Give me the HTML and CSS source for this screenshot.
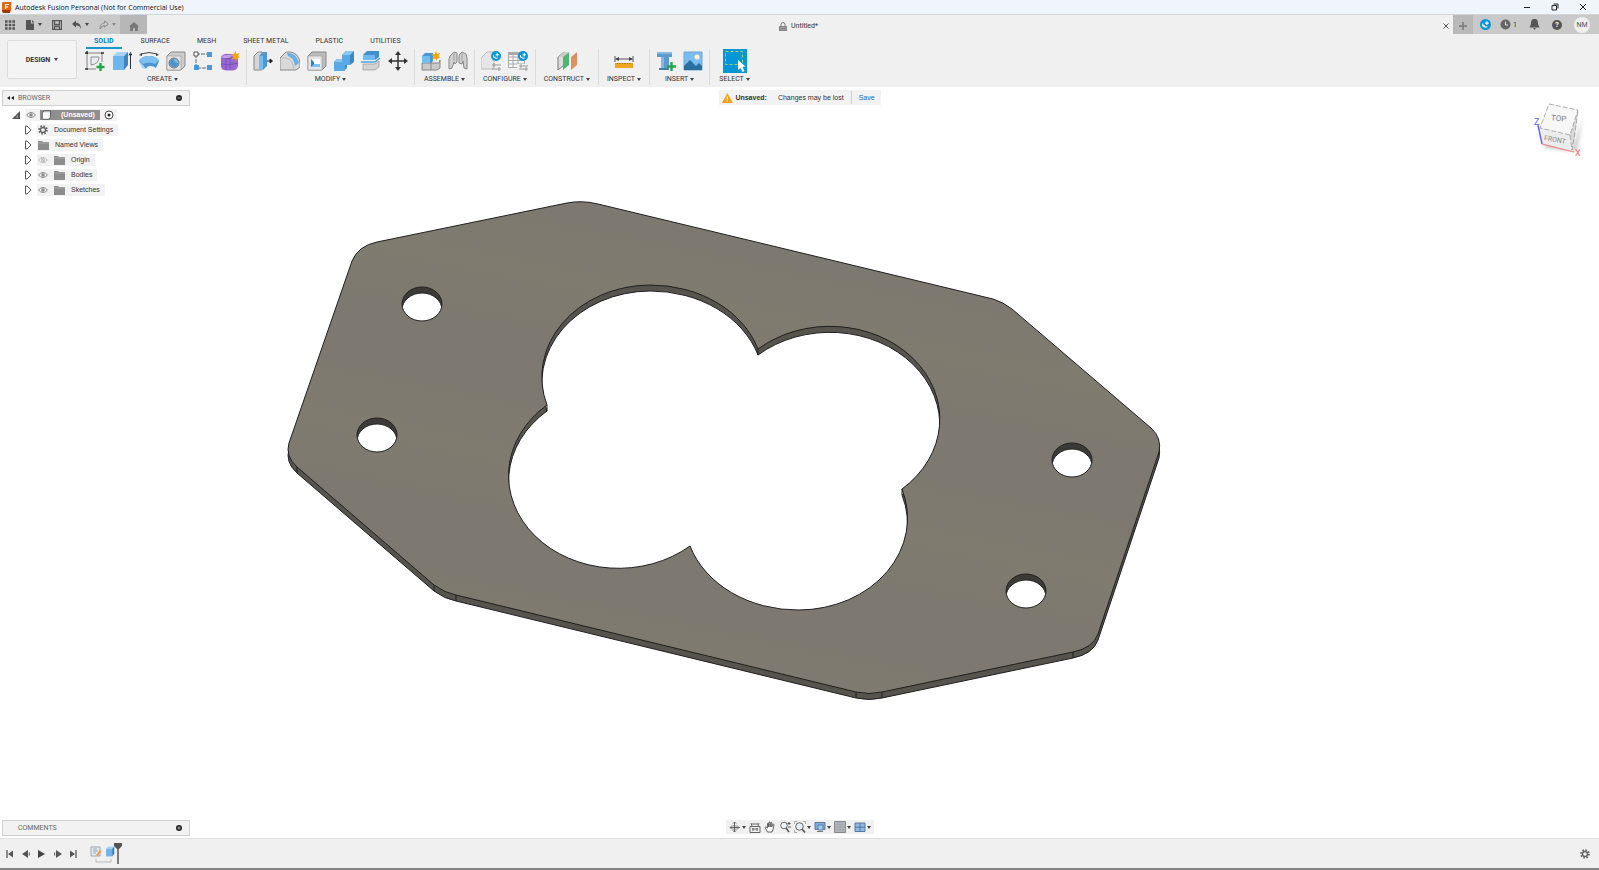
FILE: index.html
```html
<!DOCTYPE html>
<html lang="en">
<head>
  <meta charset="UTF-8">
  <title>Autodesk Fusion Personal (Not for Commercial Use)</title>
  <link rel="stylesheet" href="styles.css">
</head>
<body>
  <!-- shared icon shapes -->
  <svg class="defs" aria-hidden="true">
    <symbol id="folder" viewBox="0 0 11 10"><path d="M0 1h4l1 1h6v8H0z" fill="#8c8c8c"/><path d="M0 3h11" stroke="#b5b5b5" stroke-width=".7"/></symbol>
    <symbol id="eye" viewBox="0 0 10 8"><path d="M.5 4Q5-1 9.500 4 5 9 .5 4z" fill="none" stroke="#888"/><circle cx="5" cy="4" r="1.700" fill="#888"/></symbol>
    <symbol id="eye-off" viewBox="0 0 10 8"><path d="M.5 4Q5-1 9.500 4 5 9 .5 4zM3 1l4 6" fill="none" stroke="#bbb"/><circle cx="5" cy="4" r="1.500" fill="none" stroke="#bbb"/></symbol>
    <symbol id="open" viewBox="0 0 8 10"><path d="M1.500 1h1.500l4 4-4 4H1.500z" fill="#fff" stroke="#555"/></symbol>
    <symbol id="gear" viewBox="0 0 10 10"><circle cx="5" cy="5" r="3.800" fill="none" stroke="#666" stroke-width="2" stroke-dasharray="1.500 1.480"/><circle cx="5" cy="5" r="2.500" fill="none" stroke="#666" stroke-width="1.400"/></symbol>
    <symbol id="badge" viewBox="0 0 12 12"><circle cx="6" cy="6" r="6" fill="#0696d7"/><path d="M7.500 2.500v4M5.500 4.500h4M3 5v2.500h2.500M3.500 7.500q2 2 4.500 1" fill="none" stroke="#fff" stroke-width="1.200"/></symbol>
    <symbol id="extrude" viewBox="0 0 20 20"><path d="M1 5l4-4h11l-4 4z" fill="#a5d4f6"/><path d="M1 5h11v14H1z" fill="#6db5ec"/><path d="M12 5l4-4v13l-4 5z" fill="#3d83bd"/></symbol>
  </svg>

  <header class="titlebar">
    <svg class="logo" viewBox="0 0 10 11"><path d="M1 0h8v9l-2 2H1L0 9V1z" fill="#e8640c"/><path d="M0 8h8v3H1z" fill="#933b09"/><path d="M3.500 7V2.500h3.500M3.500 4.800h2.500" fill="none" stroke="#fff" stroke-width="1.200"/></svg>
    <span class="app-title">Autodesk Fusion Personal (Not for Commercial Use)</span>
    <div class="window-buttons">
      <button aria-label="Minimize"><svg viewBox="0 0 8 8"><path d="M1 4.500h6" stroke="#222"/></svg></button>
      <button aria-label="Restore"><svg viewBox="0 0 8 8"><path d="M1 2.500h4.500V7H1zM2.500 1H7v4.500" fill="none" stroke="#222"/></svg></button>
      <button aria-label="Close"><svg viewBox="0 0 8 8"><path d="M1 1l6 6M7 1L1 7" stroke="#222"/></svg></button>
    </div>
  </header>

  <div class="tabstrip">
    <div class="quick">
      <button aria-label="Data panel"><svg viewBox="0 0 10 10"><path d="M0 1.500h10M0 5h10M0 8.500h10" stroke="#555" stroke-width="2.600" stroke-dasharray="2.600 1.100"/></svg></button>
      <button class="with-caret" aria-label="File"><svg viewBox="0 0 10 10"><path d="M1 0h5v3.500h3V10H1z" fill="#555"/><path d="M7 0l2.500 2.500H7z" fill="#555"/></svg><i class="caret"></i></button>
      <button aria-label="Save"><svg viewBox="0 0 10 10"><path d="M.5.5h9v9h-9zM2.500 1v3.500h5V1M2.500 9V6.500h5V9" fill="none" stroke="#555" stroke-width="1.300"/></svg></button>
      <button class="with-caret undo" aria-label="Undo"><svg viewBox="0 0 10 10"><path d="M0 4l4-3.500v2.200c3 0 5 2 5 6.300C8 6.500 7 5.500 4 5.500v2z" fill="#555"/></svg><i class="caret"></i></button>
      <button class="with-caret redo" aria-label="Redo"><svg viewBox="0 0 10 10"><path d="M9.500 4l-4-3v2C3 3 1 5 1 9q1-3 4.500-3.500V7z" fill="none" stroke="#888"/></svg><i class="caret"></i></button>
    </div>
    <button class="home" aria-label="Home"><svg viewBox="0 0 10 10"><path d="M0 5.500L5 1l5 4.500H8.800V10H6V7H4v3H1.200V5.500z" fill="#777"/></svg></button>
    <div class="doc-tab">
      <span class="doc-name"><svg viewBox="0 0 8 9"><path d="M0 4h8v5H0z" fill="#888"/><path d="M2 4V2.500a2 2 0 0 1 4 0V4" fill="none" stroke="#777"/><path d="M1 5.500h6M1 7.300h6" stroke="#aaa" stroke-width=".6"/></svg>Untitled*</span>
      <button aria-label="Close tab"><svg viewBox="0 0 8 8"><path d="M1.500 1.500l5 5M6.500 1.500l-5 5" stroke="#555"/></svg></button>
    </div>
    <button class="new-tab" aria-label="New design"><svg viewBox="0 0 10 10"><path d="M5 1v8M1 5h8" stroke="#777" stroke-width="1.500"/></svg></button>
    <div class="account">
      <button aria-label="Extensions"><svg><use href="#badge"/></svg></button>
      <button class="jobs" aria-label="Job status"><svg viewBox="0 0 11 11"><circle cx="5.500" cy="5.500" r="5" fill="#666"/><path d="M5.500 2.500v3.500H8" fill="none" stroke="#ddd"/></svg>1</button>
      <button aria-label="Notifications"><svg viewBox="0 0 10 11"><path d="M5 0c3 0 3.500 2 3.500 5L10 8.500H0L1.500 5C1.500 2 2 0 5 0z" fill="#555"/><path d="M3.500 9h3L5 11z" fill="#555"/></svg></button>
      <button class="help" aria-label="Help">?</button>
      <button class="avatar" aria-label="Profile">NM</button>
    </div>
  </div>

  <div class="ribbon">
    <button class="workspace">DESIGN <i class="caret"></i></button>
    <div class="ribbon-main">
      <nav class="ribbon-tabs">
        <button class="active">SOLID</button>
        <button>SURFACE</button>
        <button>MESH</button>
        <button>SHEET METAL</button>
        <button>PLASTIC</button>
        <button>UTILITIES</button>
      </nav>
      <div class="groups">
        <section class="group">
          <div class="tools">
            <button aria-label="Create sketch"><svg viewBox="0 0 20 20"><path d="M2 2h15v9M2 2v16h9" fill="none" stroke="#666" stroke-width=".8"/><path d="M6 14V6h8q0 7-8 8z" fill="#e9edf1" stroke="#777" stroke-width=".8"/><path d="M0 2h3M2 0v3M16 2h3M0 18h3" stroke="#333" stroke-width="1.500"/><path d="M15.500 12v8M11.500 16h8" stroke="#23a545" stroke-width="2.400"/></svg></button>
            <button aria-label="Extrude"><svg viewBox="0 0 20 20"><use href="#extrude"/><path d="M18.500 18V3M17 4.500l1.500-3 1.500 3" fill="none" stroke="#333"/></svg></button>
            <button aria-label="Revolve"><svg viewBox="0 0 20 20"><path d="M0 10q3-5 10-5t10 5l-3 7q-2-2-6-2-3 0-4 3z" fill="#4b94cf"/><path d="M0 9q4-4 10-4t10 4l-4 4q-6-3-12 0z" fill="#7dbff1"/><path d="M0 11l4 3 3 4-4-1z" fill="#a4d3f5"/><path d="M2 3q8-3 16 0" fill="none" stroke="#444"/><path d="M0 4l3-2v3zM20 4l-3-2v3z" fill="#444"/></svg></button>
            <button aria-label="Hole"><svg viewBox="0 0 20 20"><path d="M1 5l4-4h14v14l-4 4H1z" fill="#ccc" stroke="#888"/><path d="M1 5h14v14H1z" fill="#e3e3e3" stroke="#999" stroke-width=".6"/><circle cx="8" cy="12" r="5" fill="#89b9dc" stroke="#777"/><path d="M8 8a4 4 0 1 0 4 4q-4 0-4-4" fill="#4d94cd"/></svg></button>
            <button aria-label="Pattern"><svg viewBox="0 0 20 20"><path d="M3 3h14M3 3v14h14" fill="none" stroke="#666" stroke-dasharray="4 1"/><path d="M1 1h4v4H1z" fill="#fff" stroke="#555"/><path d="M14 1h5v5h-5zM1 14h5v5H1zM14 14h5v5h-5z" fill="#4b98d4"/></svg></button>
            <button aria-label="Create form"><svg viewBox="0 0 20 20"><path d="M1 7q0-3 4-4h7q5 1 6 5v7q-1 4-5 4.500H6Q1 19 1 15z" fill="#9669d3"/><path d="M2 7q5 2 9 0l6-2M10 8v11M1 13q8 2 17-1M6 3v16" fill="none" stroke="#7549ae" stroke-width=".8"/><path d="M2 7q0-3 4-3h6q-1 4-10 3" fill="#bf9aed"/><path d="M15.500 0l1 3 3-1-1.500 3 2 1.500-3 .5-.5 3-2-2.500-3 1 1.500-3-2-2 3-.3z" fill="#f5a20b"/></svg></button>
          </div>
          <button class="group-label">CREATE <i class="caret"></i></button>
        </section>
        <section class="group">
          <div class="tools">
            <button aria-label="Press pull"><svg viewBox="0 0 20 20"><path d="M1 5l4-4h4v18H1z" fill="#d5d5d5" stroke="#888"/><path d="M6 5l4-4h4v14l-4 4H6z" fill="#4a98d4"/><path d="M6 5h4v14H6z" fill="#75bdf0"/><path d="M14 10h4M17 8l2.500 2-2.500 2z" stroke="#222" fill="#222"/></svg></button>
            <button aria-label="Fillet"><svg viewBox="0 0 20 20"><path d="M0 19V7l6-6h4q9 1 10 11v4l-4 3z" fill="#d9d9d9" stroke="#888"/><path d="M7 2q9-1 12 10l-4 3Q14 7 8 5z" fill="#66b0e9"/><path d="M1 7h5q7 1 8 12" fill="none" stroke="#bbb"/></svg></button>
            <button aria-label="Shell"><svg viewBox="0 0 20 20"><path d="M1 5l4-4h14v14l-4 4H1z" fill="#bcbcbc" stroke="#888"/><path d="M1 5h14v14H1z" fill="#e6e6e6" stroke="#999" stroke-width=".6"/><path d="M4 8h9v8H4z" fill="#fff"/><path d="M4 8l3 3v3l6 2H4z" fill="#357fb9"/><path d="M7 13h6v3H4z" fill="#7bc0f2"/></svg></button>
            <button aria-label="Combine"><svg viewBox="0 0 20 20"><path d="M0 11l3-3h5V4l4-4h8v11l-4 3h-3v3l-3 3H0z" fill="#3e88c4"/><path d="M0 11h8V4h8v10h-5v6H0z" fill="#5ba9e4"/><path d="M8 4l4-4h8l-4 4zM0 11l3-3h5v3z" fill="#89c7f4"/></svg></button>
            <button aria-label="Split body"><svg viewBox="0 0 20 20"><path d="M2 4l4-4h12v6l-4 3H2z" fill="#4291ce"/><path d="M2 4h12v5H2z" fill="#6fb9ee"/><path d="M0 11h14l5-4" fill="none" stroke="#50a0da" stroke-width="1.400"/><path d="M2 13h12l4-3v6l-4 3H2z" fill="#d2d2d2" stroke="#999" stroke-width=".7"/></svg></button>
            <button aria-label="Move"><svg viewBox="0 0 20 20"><path d="M10 2v16M2 10h16" stroke="#333" stroke-width="1.500"/><path d="M10 0l3 4H7zM10 20l3-4H7zM0 10l4-3v6zM20 10l-4-3v6z" fill="#333"/></svg></button>
          </div>
          <button class="group-label">MODIFY <i class="caret"></i></button>
        </section>
        <section class="group">
          <div class="tools">
            <button aria-label="New component"><svg viewBox="0 0 20 20"><path d="M1 12h17l1-3v8l-3 2H1z" fill="#c9c9c9" stroke="#888"/><path d="M1 5l3-3h8v8l-2 2H1z" fill="#4896d2"/><path d="M1 5h8v7H1z" fill="#75bcef"/><path d="M10 11v8" stroke="#888"/><path d="M15 0l1 3 3-1-1.500 3 2 1.500-3 .5-.5 3-2-2.500-3 1 1.500-3-2-2 3-.3z" fill="#f5a20b"/></svg></button>
            <button aria-label="Joint"><svg viewBox="0 0 20 20"><path d="M2 5l4-4 3 1v9l-2 2-1-2-2 6-3 1V8zM18 3l-4-2-3 3v8l3 1 1-3 1 7 3 1V7z" fill="#d0d0d0" stroke="#888"/><path d="M6 1v9M14 2v8" stroke="#9aa2a8"/></svg></button>
          </div>
          <button class="group-label">ASSEMBLE <i class="caret"></i></button>
        </section>
        <section class="group">
          <div class="tools">
            <button aria-label="Configure design"><svg viewBox="0 0 20 20"><path d="M0 18V7l6-6h7v17z" fill="#e6e6e6" stroke="#bbb"/><path d="M11 14h9M13 12v4M11 18h9M18 16v4" stroke="#999"/><use href="#badge" x="10" y="0" width="10" height="10"/></svg></button>
            <button aria-label="Configuration table"><svg viewBox="0 0 20 20"><path d="M.5 1.500h16v15H.5zM.5 6h16M.5 9.500h16M.5 13h16M5 3v13M10 3v13" fill="#f6f6f6" stroke="#aaa"/><path d="M0 1h16v3H0z" fill="#aaa"/><path d="M9 13h11v7H9z" fill="#f0f0f0"/><path d="M11 15h9M13 13v4M11 18h9M18 16v4" stroke="#999"/><use href="#badge" x="10" y="0" width="10" height="10"/></svg></button>
          </div>
          <button class="group-label">CONFIGURE <i class="caret"></i></button>
        </section>
        <section class="group">
          <div class="tools">
            <button aria-label="Offset plane"><svg viewBox="0 0 20 20"><path d="M1 6l6-5v13l-6 5z" fill="#ddd" stroke="#777"/><path d="M6 6l6-5v13l-6 5z" fill="#4db674"/><path d="M6 6l6-5H7L1 6z" fill="#ccc"/><path d="M14 6l6-5v13l-6 5z" fill="#e08f62"/></svg></button>
          </div>
          <button class="group-label">CONSTRUCT <i class="caret"></i></button>
        </section>
        <section class="group">
          <div class="tools">
            <button aria-label="Measure"><svg viewBox="0 0 20 20"><path d="M1 5v6M19 5v6M2 8h16" stroke="#555"/><path d="M1 8l4-2v4zM19 8l-4-2v4z" fill="#444"/><path d="M1 12h18v5H1z" fill="#efa51d"/><path d="M3 12.500h15" stroke="#9b6200" stroke-dasharray="1 1.500"/></svg></button>
          </div>
          <button class="group-label">INSPECT <i class="caret"></i></button>
        </section>
        <section class="group">
          <div class="tools">
            <button aria-label="Insert derive"><svg viewBox="0 0 20 20"><path d="M1 1h15v5H1z" fill="#5c9cca"/><path d="M5 6h8v13H5z" fill="#5c9cca"/><path d="M1 1h15v2H1zM5 6h3v13H5z" fill="#86b9dd"/><path d="M3 18h10" stroke="#457fa9" stroke-width="2"/><path d="M15.500 11v9M11 15.500h9" stroke="#23a545" stroke-width="2.400"/></svg></button>
            <button aria-label="Insert canvas"><svg viewBox="0 0 20 20"><path d="M1 1h18v18H1z" fill="#7bbdf0" stroke="#6aa5d1"/><path d="M1 15l6-6 6 6 3-3 3 3v4H1z" fill="#286e9e"/><circle cx="14" cy="6" r="2.500" fill="#fff3ca"/></svg></button>
          </div>
          <button class="group-label">INSERT <i class="caret"></i></button>
        </section>
        <section class="group">
          <div class="tools">
            <button class="select-tool" aria-label="Select"><svg viewBox="0 0 24 24"><path d="M0 0h24v24H0z" fill="#0696d7"/><path d="M2.500 2.500h17v13h-17z" fill="none" stroke="#9bd36a" stroke-dasharray="3 2"/><path d="M15 11v10l2.500-2 2 4 2-1-2-4 3-.5z" fill="#fff"/></svg></button>
          </div>
          <button class="group-label">SELECT <i class="caret"></i></button>
        </section>
      </div>
    </div>
  </div>

  <main class="canvas">
    <svg class="model" viewBox="0 87 1599 751" role="img" aria-label="Plate">
      <defs>
        <linearGradient id="steel" gradientUnits="userSpaceOnUse" x1="640" y1="200" x2="622" y2="290" spreadMethod="reflect">
          <stop offset="0" stop-color="#7d7870"/><stop offset="1" stop-color="#7f7b6f"/>
        </linearGradient>
        <path id="outline" d="M352 261Q358 246 377 242L567 203Q582 200 598 204L993 299Q1003 302 1012 309L1151 428Q1162 438 1159 452L1098 634Q1093 648 1073 652L882 692Q869 695 856 692L456 595Q445 593 434 585L297 467Q285 456 289 443z"/>
        <path id="cutout" d="M547 405A109 92 0 0 1 650 285A113 92 0 0 1 758 349A109 92 0 0 1 902 489A109 92 0 0 1 799 610A113 92 0 0 1 690 546A109 92 0 0 1 547 405z"/>
        <ellipse id="bolt" rx="20" ry="17"/>
        <clipPath id="cutout-clip"><use href="#cutout"/></clipPath>
        <clipPath id="bolt-clip"><use href="#bolt"/></clipPath>
        <g id="bolt-hole">
          <use href="#bolt" fill="#3c3a36"/>
          <g clip-path="url(#bolt-clip)"><use href="#bolt" y="6" fill="#fff" stroke="#222"/></g>
          <use href="#bolt" fill="none" stroke="#222"/>
        </g>
      </defs>
      <use href="#outline" y="6" fill="#57544e" stroke="#1f1f1f"/>
      <use href="#outline" fill="url(#steel)" stroke="#1f1f1f"/>
      <path d="M297 467v6M434 585v6M456 595v6M856 692v6M882 692v6M1073 652v6" stroke="#1f1f1f"/>
      <use href="#cutout" fill="#57544e"/>
      <g clip-path="url(#cutout-clip)"><use href="#cutout" y="6" fill="#fff" stroke="#1f1f1f"/></g>
      <use href="#cutout" fill="none" stroke="#1f1f1f"/>
      <path d="M758 349v6M547 405v6M902 489v6" stroke="#1f1f1f"/>
      <use href="#bolt-hole" x="422" y="304"/>
      <use href="#bolt-hole" x="377" y="435"/>
      <use href="#bolt-hole" x="1072" y="460"/>
      <use href="#bolt-hole" x="1026" y="591"/>
    </svg>

    <aside class="browser">
      <div class="panel-head">
        <svg class="collapse" viewBox="0 0 8 6"><path d="M4 1v4L1 3zM8 1v4L5 3z" fill="#222"/></svg>
        <span>BROWSER</span>
        <button aria-label="Panel options"><svg viewBox="0 0 6 6"><circle cx="3" cy="3" r="3" fill="#222"/><path d="M1.500 3h3" stroke="#999"/></svg></button>
      </div>
      <ul class="tree">
        <li class="root"><svg class="twist" viewBox="0 0 8 8"><path d="M8 0v8H0z" fill="#555"/><path d="M6 4v2.500H3.500z" fill="#aaa"/></svg>
          <span class="node"><svg class="eye"><use href="#eye"/></svg><b class="selected"><svg viewBox="0 0 11 11"><path d="M1 3l2-2h7v7l-2 2H1z" fill="#eee" stroke="#555"/><path d="M1.500 3.500h6v6h-6z" fill="#fff"/></svg>(Unsaved)</b><svg class="activate" viewBox="0 0 10 10"><circle cx="5" cy="5" r="4" fill="#fff" stroke="#444"/><circle cx="5" cy="5" r="1.500" fill="#222"/></svg></span></li>
        <li><svg class="twist"><use href="#open"/></svg><span class="node"><svg class="gear"><use href="#gear"/></svg>Document Settings</span></li>
        <li><svg class="twist"><use href="#open"/></svg><span class="node"><svg class="folder"><use href="#folder"/></svg>Named Views</span></li>
        <li><svg class="twist"><use href="#open"/></svg><span class="node"><svg class="eye"><use href="#eye-off"/></svg><svg class="folder"><use href="#folder"/></svg>Origin</span></li>
        <li><svg class="twist"><use href="#open"/></svg><span class="node"><svg class="eye"><use href="#eye"/></svg><svg class="folder"><use href="#folder"/></svg>Bodies</span></li>
        <li><svg class="twist"><use href="#open"/></svg><span class="node"><svg class="eye"><use href="#eye"/></svg><svg class="folder"><use href="#folder"/></svg>Sketches</span></li>
      </ul>
    </aside>

    <div class="notice">
      <svg viewBox="0 0 11 10"><path d="M5.500 0L11 10H0z" fill="#f7a11a"/><path d="M5.500 3.500v3M5.500 7.500v1.200" stroke="#fff" stroke-width="1.200"/></svg>
      <b>Unsaved:</b>
      <span>Changes may be lost</span>
      <a href="#">Save</a>
    </div>

    <svg class="viewcube" viewBox="0 0 54 66" role="img" aria-label="View cube">
      <defs><filter id="soft" x="-30%" y="-30%" width="160%" height="160%"><feGaussianBlur stdDeviation="2"/></filter></defs>
      <path d="M12 45l30 9 9-31-6 33-30-4z" fill="#aaa" filter="url(#soft)"/>
      <path d="M18 9l29 6-8 25-30-7z" fill="#f7f7f7"/>
      <path d="M9 33l30 7 3 16-30-7z" fill="#ececec"/>
      <path d="M47 15l-8 25 3 16 3-25z" fill="#d8d8d8"/>
      <path d="M18 9l29 6-8 25-30-7zM39 40l2 15 4-24 2-16" fill="none" stroke="#999" stroke-width=".8" stroke-dasharray="5 2"/>
      <path d="M7 30l4 19" stroke="#6a62e8" stroke-width="1.500"/>
      <path d="M11 49l32 8" stroke="#f08080"/>
      <text class="cube-top" x="20" y="26" transform="rotate(6 28 24)">TOP</text>
      <text class="cube-front" x="13" y="47" transform="rotate(10 24 44)">FRONT</text>
      <text class="axis-z" x="3" y="30">Z</text>
      <text class="axis-x" x="44" y="61">X</text>
    </svg>

    <aside class="comments panel-head">
      <span>COMMENTS</span>
      <button aria-label="Add comment"><svg viewBox="0 0 6 6"><circle cx="3" cy="3" r="3" fill="#222"/><path d="M1.500 3h3M3 1.500v3" stroke="#ccc" stroke-width=".8"/></svg></button>
    </aside>

    <div class="navbar">
      <button class="with-caret" aria-label="Orbit"><svg viewBox="0 0 12 12"><path d="M5.500 1v10M1 6.500h10M4 2.500L5.500 1 7 2.500M4 9.500L5.500 11 7 9.500" fill="none" stroke="#555" stroke-width=".9"/><ellipse cx="5.500" cy="6.500" rx="4.500" ry="1.800" fill="none" stroke="#777" stroke-width=".8"/></svg><i class="caret"></i></button>
      <button aria-label="Look at"><svg viewBox="0 0 12 12"><path d="M1 5.500h10v6H1zM3 3h6M2 2l1 3M10 2L9 5M3 8h6M4 7v3M8 7v3" fill="none" stroke="#666"/></svg></button>
      <button aria-label="Pan"><svg viewBox="0 0 12 12"><path d="M3.500 11L1 6.500l1-.7L3.500 7V2.500h1V6l.5-5h1v5l1-4.500 1 .3L7.500 6l1.700-3 .8.500L9 8.500 8 11z" fill="#fff" stroke="#555" stroke-width=".9"/></svg></button>
      <button aria-label="Zoom"><svg viewBox="0 0 12 12"><circle cx="5" cy="4.500" r="3.300" fill="#eef5fa" stroke="#666"/><path d="M7 7l3 4" stroke="#555" stroke-width="1.600"/><path d="M8.500 2.500h3M10 1v3M9 6h3" stroke="#444" stroke-width=".9"/></svg></button>
      <button class="with-caret" aria-label="Fit"><svg viewBox="0 0 12 12"><path d="M.5 3V.5H3M9 .5h2.500V3M.5 9v2.500H3" fill="none" stroke="#aaa"/><circle cx="5.500" cy="5.500" r="3.800" fill="#e3eef5" stroke="#666"/><path d="M8 8l3 3.500" stroke="#555" stroke-width="1.600"/></svg><i class="caret"></i></button>
      <button class="with-caret" aria-label="Display settings"><svg viewBox="0 0 12 12"><path d="M1 1.500h10v7H1z" fill="#7dadd9" stroke="#627a94"/><path d="M4 4h5v5H4z" fill="#a7cbed" stroke="#5b7ca4"/><path d="M3 10.500h6" stroke="#777"/></svg><i class="caret"></i></button>
      <button class="with-caret" aria-label="Grid and snaps"><svg viewBox="0 0 12 12"><path d="M.5.5h11v11H.5z" fill="#b4b8be" stroke="#888"/><path d="M3.300 1v10M6 1v10M8.700 1v10M1 3.300h10M1 6h10M1 8.700h10" stroke="#9a9fa6" stroke-width=".6"/></svg><i class="caret"></i></button>
      <button class="with-caret" aria-label="Viewports"><svg viewBox="0 0 12 12"><path d="M1 2h10v8.500H1z" fill="#8fb9e5" stroke="#57789e"/><path d="M6 2v8.500M1 6.200h10" stroke="#57789e"/></svg><i class="caret"></i></button>
    </div>
  </main>

  <footer class="timeline">
    <div class="playback">
      <button aria-label="Go to start"><svg viewBox="0 0 8 8"><path d="M1 0v8" stroke="#555" stroke-width="1.300"/><path d="M7 .5v7L2 4z" fill="#555"/></svg></button>
      <button aria-label="Step back"><svg viewBox="0 0 8 8"><path d="M6 0v8L0 4z" fill="#555"/><path d="M7.300 2.500v3" stroke="#555"/></svg></button>
      <button aria-label="Play"><svg viewBox="0 0 8 8"><path d="M0 0l7 4-7 4z" fill="#444"/></svg></button>
      <button aria-label="Step forward"><svg viewBox="0 0 8 8"><path d="M2 0v8l6-4z" fill="#555"/><path d="M.7 2.500v3" stroke="#555"/></svg></button>
      <button aria-label="Go to end"><svg viewBox="0 0 8 8"><path d="M6 0v8" stroke="#555" stroke-width="1.300"/><path d="M0 .5v7L5 4z" fill="#555"/></svg></button>
    </div>
    <svg class="features" viewBox="0 0 32 22" role="img" aria-label="Sketch1, Extrude1">
      <path d="M1 4h9v9H1zM3 6h4M3 8h5M3 10h3" fill="#e5edf4" stroke="#98a5b0"/>
      <path d="M6 12l4-5 1.500 1-4 5z" fill="#ef9446"/>
      <use href="#extrude" x="15" y="3" width="12" height="11"/>
      <path d="M6 16v3h15v-3" fill="none" stroke="#bbb"/>
      <path d="M24 0h8v3l-3 3h-2l-3-3z" fill="#555"/>
      <path d="M28 4v17" stroke="#555" stroke-width="1.500"/>
    </svg>
    <button class="settings" aria-label="Timeline settings"><svg><use href="#gear"/></svg></button>
  </footer>
</body>
</html>
```

FILE: styles.css
```css
* {
  box-sizing: border-box;
}

body {
  margin: 0;
  min-height: 100vh;
  display: flex;
  flex-direction: column;
  font-family: Roboto, "Liberation Sans", sans-serif;
  font-size: 7px;
  color: #333;
  background: #fff;
}

button {
  display: flex;
  align-items: center;
  justify-content: center;
  padding: 0;
  border: 0;
  background: none;
  font: inherit;
  color: inherit;
}

svg {
  display: block;
  flex: none;
}

.defs {
  position: absolute;
  width: 0;
  height: 0;
}

.caret {
  border: 2px solid transparent;
  border-top: 3px solid #444;
  border-bottom: 0;
}

/* title bar */
.titlebar {
  display: flex;
  align-items: center;
  height: 15px;
  padding: 0 12px 0 2px;
  background: #f0f4fb;
  border-bottom: 1px solid #d2d5da;
}

.logo {
  width: 10px;
  height: 11px;
}

.app-title {
  margin-left: 3px;
  font-family: "Open Sans", sans-serif;
  font-size: 7px;
  color: #111;
}

.window-buttons {
  display: flex;
  gap: 20px;
  margin-left: auto;
}

.window-buttons svg {
  width: 8px;
  height: 8px;
}

/* document tabs */
.tabstrip {
  display: flex;
  height: 19px;
  background: #c9c9c9;
}

.quick {
  display: flex;
  align-items: center;
  width: 120px;
  padding-left: 5px;
  gap: 10px;
}

.quick svg,
.home svg,
.new-tab svg {
  width: 10px;
  height: 10px;
}

.with-caret {
  gap: 3px;
}

.redo .caret {
  border-top-color: #888;
}

.home {
  width: 27px;
  padding-top: 3px;
  background: #b7b7b7;
}

.doc-tab {
  flex: 1;
  display: grid;
  grid-template-columns: 1fr auto 1fr;
  align-items: center;
  padding: 3px 3px 0 0;
  background: #f0f0f0;
}

.doc-name {
  grid-column: 2;
  display: flex;
  align-items: center;
  gap: 4px;
  font-size: 7px;
}

.doc-name svg {
  width: 8px;
  height: 9px;
}

.doc-tab button {
  justify-self: end;
}

.doc-tab button svg {
  width: 8px;
  height: 8px;
}

.new-tab {
  width: 20px;
  padding-top: 2px;
  background: #b9b9b9;
}

.account {
  display: flex;
  align-items: center;
  gap: 12px;
  padding: 0 9px 0 7px;
}

.account svg {
  width: 11px;
  height: 11px;
}

.jobs {
  gap: 2px;
  margin-left: -3px;
}

.help {
  width: 10px;
  height: 10px;
  border-radius: 50%;
  background: #555;
  color: #fff;
  font-weight: bold;
}

.avatar {
  width: 16px;
  height: 16px;
  border-radius: 50%;
  background: #efefef;
  color: #555;
}

/* ribbon */
.ribbon {
  display: flex;
  height: 53px;
  background: #f0f0f0;
}

.workspace {
  gap: 4px;
  width: 70px;
  height: 39px;
  margin: 6px 2px 0 7px;
  border: 1px solid #dcdcdc;
  border-radius: 2px;
  background: #f4f4f4;
  font-weight: bold;
}

.ribbon-tabs {
  display: flex;
  gap: 11px;
  height: 15px;
  padding-left: 7px;
}

.ribbon-tabs button {
  padding: 1px 8px 0;
  border-bottom: 2px solid transparent;
}

.ribbon-tabs .active {
  color: #0a7fc0;
  border-bottom-color: #1a95d3;
  font-weight: bold;
}

.groups {
  display: flex;
}

.group {
  display: flex;
  flex-direction: column;
  align-items: center;
  min-width: 49px;
  padding: 0 6px;
  border-right: 1px solid #dcdcdc;
}

.group:last-child {
  border-right: 0;
}

.tools {
  display: flex;
  align-items: center;
  gap: 7px;
  height: 24px;
}

.tools svg {
  width: 20px;
  height: 20px;
}

.tools .select-tool svg {
  width: 24px;
  height: 24px;
}

.group-label {
  gap: 2px;
  height: 12px;
  padding: 0 2px;
}

/* modelling canvas */
.canvas {
  position: relative;
  flex: 1;
  display: flex;
}

.model {
  flex: 1;
  width: 100%;
  min-width: 0;
}

.browser {
  position: absolute;
  top: 3px;
  left: 2px;
}

.panel-head {
  display: flex;
  align-items: center;
  width: 188px;
  height: 16px;
  padding: 0 7px 0 3px;
  border: 1px solid #d0d0d0;
  background: #f2f2f2;
  color: #666;
}

.panel-head span {
  flex: 1;
  padding-left: 4px;
}

.collapse {
  width: 8px;
  height: 6px;
}

.panel-head button svg {
  width: 6px;
  height: 6px;
}

.tree {
  margin: 1px 0 0;
  padding: 0 0 0 22px;
  list-style: none;
  font-family: "Liberation Sans", sans-serif;
  font-size: 7px;
}

.tree li {
  display: flex;
  align-items: center;
  gap: 5px;
  height: 15px;
}

.tree .root {
  margin-left: -12px;
}

.twist {
  width: 8px;
  height: 10px;
}

.root .twist {
  height: 8px;
}

.node {
  display: flex;
  align-items: center;
  height: 12px;
  padding: 0 5px 0 1px;
  gap: 6px;
  background: #f2f2f2;
}

.root .node {
  gap: 4px;
  padding-right: 3px;
}

.selected {
  display: flex;
  align-items: center;
  gap: 9px;
  height: 10px;
  padding: 0 5px 0 1px;
  background: #8f8f8f;
  color: #fff;
}

.selected svg,
.folder {
  width: 11px;
  height: 10px;
}

.eye {
  width: 10px;
  height: 8px;
}

.gear,
.activate {
  width: 10px;
  height: 10px;
}

.notice {
  position: absolute;
  top: 3px;
  left: 50%;
  transform: translateX(-50%);
  display: flex;
  align-items: center;
  height: 15px;
  padding: 0 6px 0 3px;
  background: #f2f2f2;
  font-family: "Liberation Sans", sans-serif;
  white-space: nowrap;
}

.notice svg {
  width: 11px;
  height: 10px;
  margin-right: 3px;
}

.notice span {
  margin: 0 7px 0 11px;
}

.notice a {
  padding-left: 7px;
  border-left: 1px solid #ccc;
  line-height: 13px;
  color: #0a6ebd;
  text-decoration: none;
}

.viewcube {
  position: absolute;
  top: 8px;
  right: 14px;
  width: 54px;
  height: 66px;
}

.cube-top {
  font-size: 8px;
  fill: #777;
}

.cube-front {
  font-size: 7px;
  fill: #888;
}

.axis-z {
  font-size: 9px;
  fill: #6a62e8;
}

.axis-x {
  font-size: 9px;
  fill: #f06464;
}

.comments {
  position: absolute;
  bottom: 2px;
  left: 2px;
  padding-left: 11px;
}

.navbar {
  position: absolute;
  bottom: 4px;
  left: 50%;
  transform: translateX(-50%);
  display: flex;
  align-items: center;
  gap: 3px;
  height: 14px;
  padding: 0 3px;
  background: #f0f0f0;
}

.navbar svg {
  width: 12px;
  height: 12px;
}

.navbar .with-caret {
  gap: 1px;
}

/* timeline */
.timeline {
  display: flex;
  align-items: center;
  height: 32px;
  padding: 0 9px 0 6px;
  background: #f0f0f0;
  border-top: 1px solid #e0e0e0;
  border-bottom: 2px solid #858585;
}

.playback {
  display: flex;
  gap: 8px;
}

.playback svg {
  width: 8px;
  height: 8px;
}

.features {
  width: 32px;
  height: 22px;
  margin-left: 12px;
}

.settings {
  margin-left: auto;
}

.settings svg {
  width: 10px;
  height: 10px;
}
```
